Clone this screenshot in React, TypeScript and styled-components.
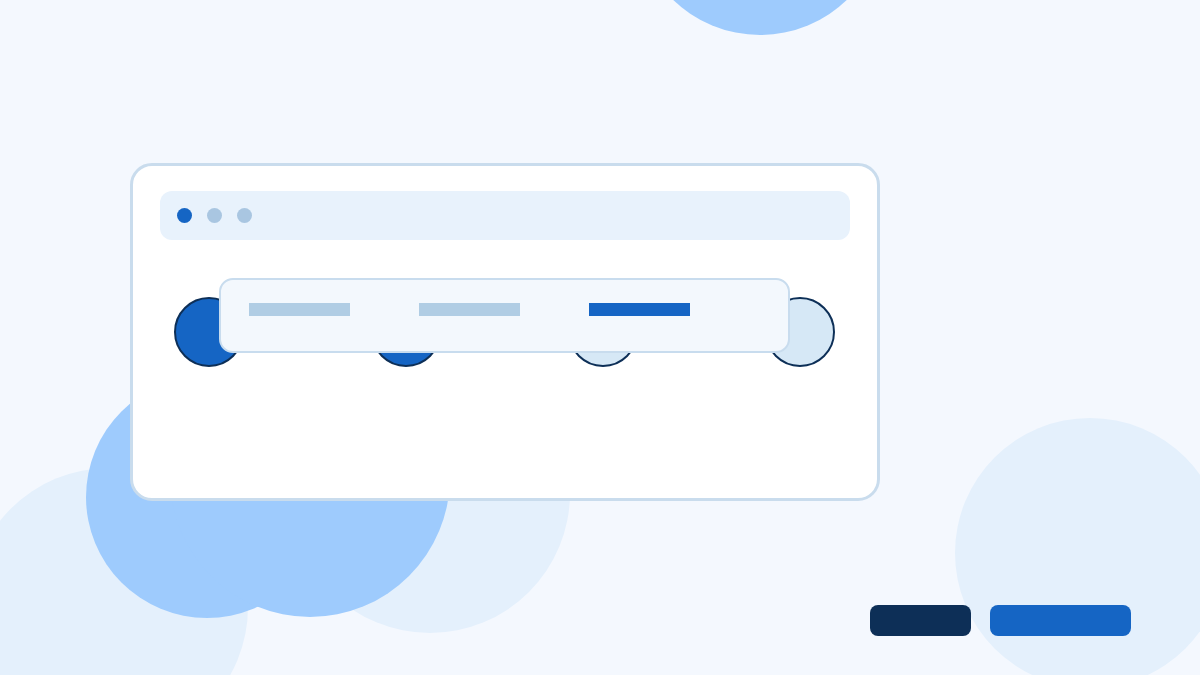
import React from 'react'
import styled, { createGlobalStyle } from 'styled-components'

const GlobalStyle = createGlobalStyle`
  html, body {
    margin: 0;
    padding: 0;
    background: #f4f8fe;
    font-family: 'Inter', 'Liberation Sans', sans-serif;
  }
`

type BlobProps = {
  $x: number
  $y: number
  $r: number
  $color: string
}

type Step = { done: boolean }
type Tab = { active: boolean }

const steps: Step[] = [{ done: true }, { done: true }, { done: false }, { done: false }]
const tabs: Tab[] = [{ active: false }, { active: false }, { active: true }]

const blobs: BlobProps[] = [
  { $x: 109, $y: 607, $r: 139, $color: '#e4f0fc' },
  { $x: 430, $y: 493, $r: 140, $color: '#e4f0fc' },
  { $x: 1090, $y: 553, $r: 135, $color: '#e4f0fc' },
  { $x: 207, $y: 497, $r: 121, $color: '#9ecbfd' },
  { $x: 310, $y: 477, $r: 140, $color: '#9ecbfd' },
  { $x: 760, $y: -90, $r: 125, $color: '#9ecbfd' },
]

export default function App() {
  return (
    <>
      <GlobalStyle />
      <Canvas>
        {blobs.map((b, i) => (
          <Blob key={i} {...b} />
        ))}
        <Content>
          <Window>
            <TitleBar>
              <Dot $active />
              <Dot />
              <Dot />
            </TitleBar>
            <Stepper>
              <StepRow>
                {steps.map((s, i) => (
                  <StepCircle key={i} $done={s.done} />
                ))}
              </StepRow>
              <TabCard>
                {tabs.map((t, i) => (
                  <TabBar key={i} $active={t.active} />
                ))}
              </TabCard>
            </Stepper>
          </Window>
          <ButtonRow>
            <Button $variant="dark" $width={101} />
            <Button $variant="primary" $width={141} />
          </ButtonRow>
        </Content>
      </Canvas>
    </>
  )
}

const Canvas = styled.div`
  position: relative;
  width: 1200px;
  height: 675px;
  overflow: hidden;
  background: #f4f8fe;
`

const Blob = styled.div<BlobProps>`
  position: absolute;
  left: ${(p) => p.$x - p.$r}px;
  top: ${(p) => p.$y - p.$r}px;
  width: ${(p) => p.$r * 2}px;
  height: ${(p) => p.$r * 2}px;
  border-radius: 50%;
  background: ${(p) => p.$color};
`

const Content = styled.div`
  position: relative;
  z-index: 1;
  display: flex;
  flex-direction: column;
  align-items: flex-start;
  padding: 163px 69px 0 130px;
  box-sizing: border-box;
  height: 100%;
`

const Window = styled.div`
  width: 750px;
  height: 338px;
  box-sizing: border-box;
  border: 3px solid #c9dced;
  border-radius: 22px;
  background: #ffffff;
  padding: 25px 27px;
`

const TitleBar = styled.div`
  display: flex;
  align-items: center;
  gap: 15px;
  height: 49px;
  padding-left: 17px;
  border-radius: 12px;
  background: #e8f2fc;
`

const Dot = styled.span<{ $active?: boolean }>`
  width: 15px;
  height: 15px;
  border-radius: 50%;
  background: ${(p) => (p.$active ? '#1565c4' : '#a9c6e1')};
`

const Stepper = styled.div`
  position: relative;
  margin-top: 57px;
`

const StepRow = styled.div`
  display: flex;
  justify-content: space-between;
  padding: 0 15px 0 14px;
`

const StepCircle = styled.div<{ $done: boolean }>`
  width: 70px;
  height: 70px;
  box-sizing: border-box;
  border-radius: 50%;
  border: 2.5px solid #0d2f57;
  background: ${(p) => (p.$done ? '#1565c4' : '#d6e8f6')};
`

const TabCard = styled.div`
  position: absolute;
  left: 59px;
  top: -19px;
  width: 571px;
  height: 75px;
  box-sizing: border-box;
  display: flex;
  align-items: flex-start;
  gap: 69px;
  padding: 23px 28px;
  border: 2px solid #c8dcee;
  border-radius: 14px;
  background: #f3f8fd;
`

const TabBar = styled.div<{ $active: boolean }>`
  width: 101px;
  height: 13px;
  background: ${(p) => (p.$active ? '#1565c4' : '#b0cde4')};
`

const ButtonRow = styled.div`
  align-self: stretch;
  display: flex;
  justify-content: flex-end;
  gap: 19px;
  margin-top: 104px;
`

const Button = styled.button<{ $variant: 'dark' | 'primary'; $width: number }>`
  width: ${(p) => p.$width}px;
  height: 31px;
  border: none;
  padding: 0;
  border-radius: 8px;
  background: ${(p) => (p.$variant === 'dark' ? '#0d2f57' : '#1565c4')};
`
